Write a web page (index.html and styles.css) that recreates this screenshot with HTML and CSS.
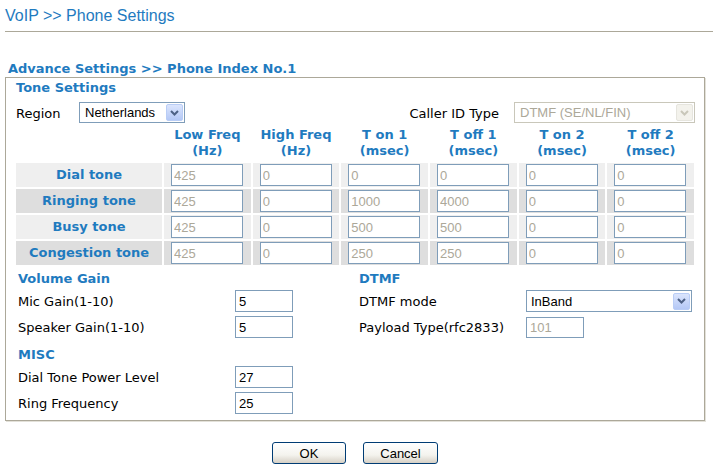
FILE: index.html
```html
<!DOCTYPE html>
<html>
<head>
<meta charset="utf-8">
<link rel="stylesheet" href="styles.css">
</head>
<body>
<div class="page">
  <h1 class="title">VoIP &gt;&gt; Phone Settings</h1>
  <div class="crumb">Advance Settings &gt;&gt; Phone Index No.1</div>
  <div class="box">
    <div class="sec">Tone Settings</div>
    <div class="region-row">
      <span class="lbl region-lbl">Region</span>
      <div class="sel sel-region"><span class="sel-text">Netherlands</span><span class="arrow"><svg width="9" height="6" viewBox="0 0 9 6"><path d="M1 1 L4.5 4.5 L8 1" fill="none" stroke="#4d6185" stroke-width="2"/></svg></span></div>
      <span class="lbl caller-lbl">Caller ID Type</span>
      <div class="sel sel-caller disabled"><span class="sel-text">DTMF (SE/NL/FIN)</span><span class="arrow"><svg width="9" height="6" viewBox="0 0 9 6"><path d="M1 1 L4.5 4.5 L8 1" fill="none" stroke="#c9c7ba" stroke-width="2"/></svg></span></div>
    </div>
    <div class="tone-grid">
      <div></div>
      <div class="th">Low Freq<br>(Hz)</div>
      <div class="th">High Freq<br>(Hz)</div>
      <div class="th">T on 1<br>(msec)</div>
      <div class="th">T off 1<br>(msec)</div>
      <div class="th">T on 2<br>(msec)</div>
      <div class="th">T off 2<br>(msec)</div>

      <div class="rl odd">Dial tone</div>
      <div class="td odd"><input class="tin" value="425" disabled></div>
      <div class="td odd"><input class="tin" value="0" disabled></div>
      <div class="td odd"><input class="tin" value="0" disabled></div>
      <div class="td odd"><input class="tin" value="0" disabled></div>
      <div class="td odd"><input class="tin" value="0" disabled></div>
      <div class="td odd"><input class="tin" value="0" disabled></div>

      <div class="rl even">Ringing tone</div>
      <div class="td even"><input class="tin" value="425" disabled></div>
      <div class="td even"><input class="tin" value="0" disabled></div>
      <div class="td even"><input class="tin" value="1000" disabled></div>
      <div class="td even"><input class="tin" value="4000" disabled></div>
      <div class="td even"><input class="tin" value="0" disabled></div>
      <div class="td even"><input class="tin" value="0" disabled></div>

      <div class="rl odd">Busy tone</div>
      <div class="td odd"><input class="tin" value="425" disabled></div>
      <div class="td odd"><input class="tin" value="0" disabled></div>
      <div class="td odd"><input class="tin" value="500" disabled></div>
      <div class="td odd"><input class="tin" value="500" disabled></div>
      <div class="td odd"><input class="tin" value="0" disabled></div>
      <div class="td odd"><input class="tin" value="0" disabled></div>

      <div class="rl even">Congestion tone</div>
      <div class="td even"><input class="tin" value="425" disabled></div>
      <div class="td even"><input class="tin" value="0" disabled></div>
      <div class="td even"><input class="tin" value="250" disabled></div>
      <div class="td even"><input class="tin" value="250" disabled></div>
      <div class="td even"><input class="tin" value="0" disabled></div>
      <div class="td even"><input class="tin" value="0" disabled></div>
    </div>

    <div class="lower">
      <div class="col col-left">
        <div class="sec sub">Volume Gain</div>
        <div class="frow"><span class="lbl">Mic Gain(1-10)</span><input class="fin" value="5"></div>
        <div class="frow"><span class="lbl">Speaker Gain(1-10)</span><input class="fin" value="5"></div>
        <div class="sec sub misc">MISC</div>
        <div class="frow"><span class="lbl">Dial Tone Power Level</span><input class="fin" value="27"></div>
        <div class="frow"><span class="lbl">Ring Frequency</span><input class="fin" value="25"></div>
      </div>
      <div class="col col-right">
        <div class="sec sub">DTMF</div>
        <div class="frow"><span class="lbl">DTMF mode</span><div class="sel sel-dtmf"><span class="sel-text">InBand</span><span class="arrow"><svg width="9" height="6" viewBox="0 0 9 6"><path d="M1 1 L4.5 4.5 L8 1" fill="none" stroke="#4d6185" stroke-width="2"/></svg></span></div></div>
        <div class="frow"><span class="lbl">Payload Type(rfc2833)</span><input class="fin dis" value="101" disabled></div>
      </div>
    </div>
  </div>
  <div class="buttons">
    <button class="btn btn-ok">OK</button>
    <button class="btn btn-cancel">Cancel</button>
  </div>
</div>
</body>
</html>
```
FILE: styles.css
```css
html, body {
  margin: 0;
  padding: 0;
  background: #ffffff;
}
body {
  font-family: "DejaVu Sans", Verdana, sans-serif;
  font-size: 13px;
  color: #000;
}
.page {
  padding: 0 0 0 5px;
}
.title {
  margin: 0;
  padding: 6px 0 0 0;
  height: 25px;
  box-sizing: content-box;
  font-family: "Liberation Sans", Arial, sans-serif;
  font-weight: normal;
  font-size: 16px;
  line-height: 20px;
  color: #1f7bbf;
  border-bottom: 1px solid #aca899;
}
.crumb {
  margin: 28px 0 0 3px;
  height: 17px;
  line-height: 17px;
  font-weight: bold;
  font-size: 13px;
  color: #1f7bbf;
}
.box {
  width: 700px;
  border: 1px solid #aca899;
  box-shadow: inset 1px 1px 0 #ffffff, 1px 1px 0 #e3e1d9;
  padding: 2px 9px 6px 10px;
  box-sizing: border-box;
}
.sec {
  font-weight: bold;
  color: #1f7bbf;
  font-size: 13px;
  height: 16px;
  line-height: 16px;
}
.region-row {
  display: flex;
  align-items: center;
  margin-top: 6px;
  height: 21px;
}
.lbl {
  white-space: nowrap;
}
.region-lbl {
  width: 63px;
  padding-top: 2px;
}
.caller-lbl {
  margin-left: auto;
  margin-right: 15px;
  padding-top: 2px;
}
.sel {
  display: flex;
  align-items: center;
  justify-content: space-between;
  box-sizing: border-box;
  height: 21px;
  border: 1px solid #7f9db9;
  background: #fff;
  font-family: "Liberation Sans", Arial, sans-serif;
  font-size: 13px;
  padding: 1px 1px 1px 5px;
}
.sel.disabled {
  border-color: #c9c7ba;
  color: #aca899;
}
.sel-region {
  width: 106px;
}
.sel-caller {
  width: 181px;
}
.sel-dtmf {
  width: 166px;
  height: 22px;
  padding-left: 4px;
}
.arrow {
  width: 17px;
  height: 17px;
  box-sizing: border-box;
  border: 1px solid #b9cdf6;
  border-radius: 2px;
  background: linear-gradient(#dbe5fd, #b4c8f6);
  display: flex;
  align-items: center;
  justify-content: center;
}
.sel.disabled .arrow {
  border-color: #e6e5de;
  background: #f3f2ec;
}
.tone-grid {
  display: grid;
  grid-template-columns: 146px repeat(6, 1fr);
  column-gap: 2px;
  row-gap: 2px;
  margin-top: 4px;
  width: 678px;
}
.th {
  font-weight: bold;
  color: #1f7bbf;
  text-align: center;
  line-height: 16px;
  padding-bottom: 2px;
}
.rl {
  font-weight: bold;
  color: #1f7bbf;
  text-align: center;
  height: 24px;
  line-height: 24px;
}
.odd { background: #efefef; }
.even { background: #dedede; }
.td {
  height: 24px;
  box-sizing: border-box;
  padding: 1px 0 0 7px;
}
.tin {
  width: 72px;
  height: 22px;
  box-sizing: border-box;
  border: 1px solid #7f9db9;
  background: #fff;
  margin: 0;
  padding: 0 2px;
  font-family: "Liberation Sans", Arial, sans-serif;
  font-size: 13px;
  color: #aca899;
  -webkit-text-fill-color: #aca899;
  opacity: 1;
}
.lower {
  display: flex;
  margin-top: 6px;
  padding-left: 2px;
}
.col-left {
  width: 341px;
}
.col-right {
  width: 335px;
}
.sub {
  height: 15px;
  line-height: 15px;
}
.misc {
  margin-top: 9px;
}
.frow {
  display: flex;
  align-items: center;
  height: 22px;
  margin-top: 4px;
}
.col-left .frow .lbl {
  width: 217px;
}
.col-right .frow .lbl {
  width: 167px;
}
.fin {
  width: 58px;
  height: 22px;
  box-sizing: border-box;
  border: 1px solid #7f9db9;
  background: #fff;
  margin: 0;
  padding: 0 3px;
  font-family: "Liberation Sans", Arial, sans-serif;
  font-size: 13px;
  color: #000;
}
.fin.dis {
  color: #aca899;
  -webkit-text-fill-color: #aca899;
  height: 21px;
}
.buttons {
  display: flex;
  justify-content: center;
  gap: 17px;
  margin-top: 21px;
  padding-right: 8px;
}
.btn {
  height: 22px;
  box-sizing: border-box;
  border: 1px solid #003c74;
  border-radius: 3px;
  background: linear-gradient(#ffffff, #f4f3ee 60%, #d6d0c5);
  font-family: "Liberation Sans", Arial, sans-serif;
  font-size: 13px;
  color: #000;
  padding: 0;
  margin: 0;
}
.btn-ok { width: 74px; }
.btn-cancel { width: 75px; }
```
